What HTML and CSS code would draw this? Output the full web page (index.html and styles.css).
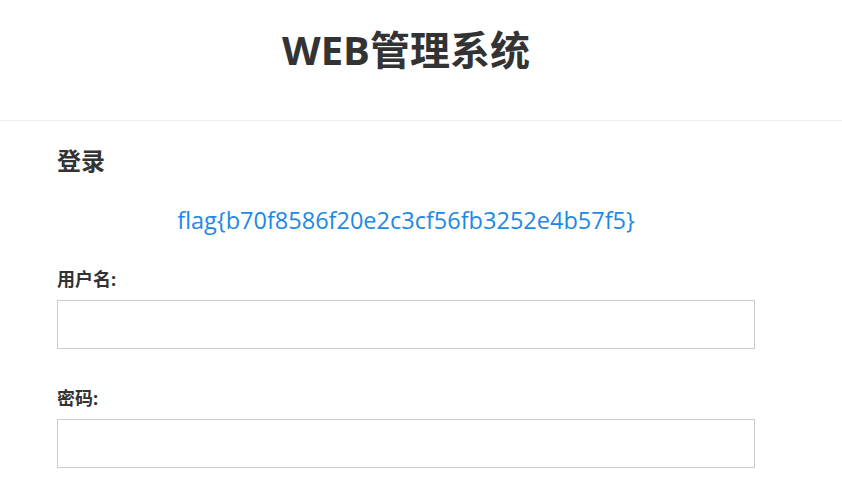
FILE: index.html
```html
<!DOCTYPE html>
<html lang="zh-CN">
<head>
<meta charset="UTF-8" />
<title>WEB管理系统</title>
<meta name="viewport" content="width=device-width, initial-scale=1.0" />
<link rel="stylesheet" href="styles.css">
</head>
<body>
<div class="header">
    <h1 class="title">WEB管理系统</h1>
</div>
<div class="main">
    <h2 class="login-title">登录</h2>
    <p class="flag">flag{b70f8586f20e2c3cf56fb3252e4b57f5}</p>
    <form class="login-form">
        <div class="field">
            <label for="username">用户名:</label>
            <input type="text" id="username" name="username" />
        </div>
        <div class="field">
            <label for="password">密码:</label>
            <input type="password" id="password" name="password" />
        </div>
    </form>
</div>
</body>
</html>
```

FILE: styles.css
```css
body {
    margin: 0;
    background: #fff;
    color: #333;
    font-family: "Open Sans", "Noto Sans CJK SC", sans-serif;
}
.header {
    height: 121px;
    border-bottom: 1px solid #eee;
    box-sizing: border-box;
    padding-top: 23px;
}
.title {
    width: 698px;
    margin: 0 0 0 57px;
    text-align: center;
    font-size: 40px;
    font-weight: bold;
    line-height: 54px;
}
.main {
    width: 698px;
    margin-left: 57px;
    padding-top: 24px;
}
.login-title {
    margin: 0;
    font-size: 24px;
    font-weight: bold;
    line-height: 32px;
}
.flag {
    margin: 26px 0 0;
    text-align: center;
    color: #1e88e5;
    font-size: 23.5px;
    line-height: 34px;
}
.login-form {
    margin-top: 29px;
}
.field {
    margin-bottom: 36px;
}
.field label {
    display: block;
    font-size: 18px;
    font-weight: bold;
    line-height: 26px;
    margin-bottom: 8px;
}
.field input {
    display: block;
    width: 100%;
    height: 49px;
    box-sizing: border-box;
    border: 1px solid #ccc;
    padding: 0 10px;
    font-size: 16px;
}
```
